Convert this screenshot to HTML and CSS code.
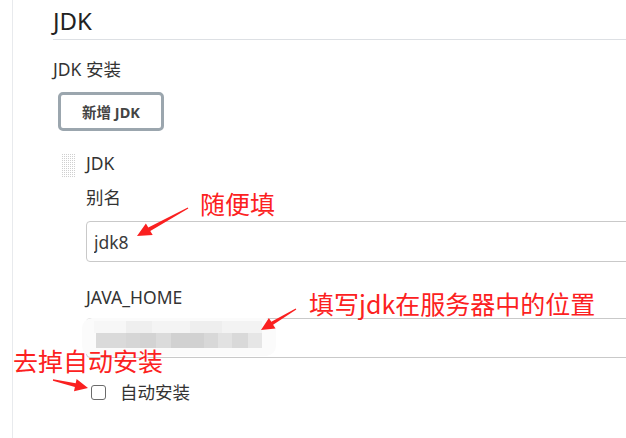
FILE: index.html
```html
<!DOCTYPE html>
<html lang="zh-CN">
<head>
<meta charset="utf-8">
<title>JDK</title>
<link rel="stylesheet" href="styles.css">
</head>
<body>
<div class="page">
  <h1 class="section-title">JDK</h1>
  <div class="field-label">JDK 安装</div>
  <button class="btn-add" type="button">新增 JDK</button>
  <div class="repeated">
    <div class="drag-handle"></div>
    <div class="repeated-body">
      <div class="item-title">JDK</div>
      <div class="field-label sub">别名</div>
      <input class="text-input first" type="text" value="jdk8">
      <div class="field-label sub home">JAVA_HOME</div>
      <input class="text-input second" type="text" value="">
      <label class="check-row"><span class="checkbox"></span><span class="check-text">自动安装</span></label>
    </div>
  </div>
</div>

<div class="mosaic">
  <div class="mosaic-top"></div>
  <div class="mosaic-bar"></div>
</div>

<div class="annotations">
  <svg class="arrows" width="626" height="438" viewBox="0 0 626 438">
    <polygon points="187.8,207.4 148.3,227.5 145.9,223.4 137,236 152.7,235.0 150.3,231.1 188.3,208.6" />
    <polygon points="295.7,308.5 271.3,321.8 268.9,318.0 261,330 275.5,328.6 273.1,324.8 296.3,309.6" />
    <polygon points="53.1,379.3 75.7,383.3 76.6,379.0 88,388 74.0,391.2 74.9,386.9 52.9,380.7" />
  </svg>
  <span class="note note-alias">随便填</span>
  <span class="note note-home">填写jdk在服务器中的位置</span>
  <span class="note note-auto">去掉自动安装</span>
</div>
</body>
</html>
```

FILE: styles.css
```css
html, body {
  margin: 0;
  padding: 0;
}

body {
  width: 626px;
  height: 438px;
  overflow: hidden;
  position: relative;
  background: #ffffff;
  color: #333333;
  font-family: "Noto Sans", "Noto Sans CJK SC", sans-serif;
}

.page {
  margin-left: 12px;
  border-left: 1px solid #e8eaed;
  height: 438px;
  padding-left: 40px;
  box-sizing: border-box;
}

.section-title {
  margin: 0;
  padding: 5px 0 2px;
  font-size: 24px;
  font-weight: 400;
  line-height: 32px;
  color: #222222;
  border-bottom: 1px solid #dde0e4;
}

.field-label {
  margin-top: 18px;
  font-size: 17.5px;
  line-height: 22px;
  color: #333333;
}

.btn-add {
  display: block;
  margin: 12px 0 0 5px;
  width: 106px;
  height: 39px;
  box-sizing: border-box;
  border: 3px solid #9ba6ae;
  border-radius: 5px;
  background: #ffffff;
  color: #444444;
  font-family: "Noto Sans", "Noto Sans CJK SC", sans-serif;
  font-size: 14.5px;
  font-weight: 700;
  padding: 0;
}

.repeated {
  display: flex;
  margin-top: 21px;
}

.drag-handle {
  flex: none;
  width: 14px;
  height: 24px;
  margin: 1px 10px 0 9px;
  background-image:
    linear-gradient(90deg, transparent 1px, #ffffff 1px),
    linear-gradient(0deg, transparent 1px, #ffffff 1px);
  background-color: #cfcfcf;
  background-size: 2px 2px;
}

.repeated-body {
  flex: none;
  display: flex;
  flex-direction: column;
  align-items: flex-start;
}

.item-title {
  font-size: 17.5px;
  line-height: 22px;
  color: #333333;
}

.field-label.sub {
  margin-top: 12px;
}

.field-label.home {
  margin-top: 24px;
}

.text-input {
  width: 560px;
  box-sizing: border-box;
  border: 1px solid #c9c9c9;
  border-radius: 4px;
  padding: 0 7px;
  font-family: "Noto Sans", "Noto Sans CJK SC", sans-serif;
  font-size: 17.5px;
  color: #3a3a3a;
  background: #ffffff;
  outline: none;
}

.text-input.first {
  margin-top: 13px;
  height: 41px;
}

.text-input.second {
  margin-top: 10px;
  height: 40px;
}

.check-row {
  display: flex;
  align-items: center;
  margin-top: 23px;
  height: 22px;
}

.checkbox {
  flex: none;
  width: 15px;
  height: 15px;
  box-sizing: border-box;
  margin-left: 5px;
  border: 1px solid #6b6b6b;
  border-radius: 3px;
  background: #ffffff;
}

.check-text {
  margin-left: 14px;
  font-size: 17.5px;
  line-height: 22px;
  color: #333333;
}

/* blurred (redacted) path over the JAVA_HOME input */
.mosaic {
  position: absolute;
  left: 82px;
  top: 318px;
  width: 194px;
  height: 38px;
  border-radius: 10px;
  background: #fbfbfb;
  filter: blur(0.7px);
}

.mosaic-top {
  position: absolute;
  left: 12px;
  top: 3px;
  width: 168px;
  height: 12px;
  background: linear-gradient(90deg,
    #f7f7f7 0, #f7f7f7 32px,
    #efefef 32px, #efefef 58px,
    #f4f4f4 58px, #f4f4f4 96px,
    #eeeeee 96px, #eeeeee 128px,
    #f3f3f3 128px, #f3f3f3 168px);
}

.mosaic-bar {
  position: absolute;
  left: 14px;
  top: 15px;
  width: 166px;
  height: 15px;
  background: linear-gradient(90deg,
    #dadada 0, #dadada 30px,
    #d6d6d6 30px, #d6d6d6 44px,
    #d3d3d3 44px, #d3d3d3 60px,
    #dbdbdb 60px, #dbdbdb 75px,
    #d1d1d1 75px, #d1d1d1 108px,
    #d8d8d8 108px, #d8d8d8 122px,
    #e2e2e2 122px, #e2e2e2 136px,
    #d9d9d9 136px, #d9d9d9 152px,
    #e6e6e6 152px, #e6e6e6 166px);
}

.annotations {
  position: absolute;
  left: 0;
  top: 0;
  width: 626px;
  height: 438px;
  pointer-events: none;
}

.arrows {
  position: absolute;
  left: 0;
  top: 0;
}

.arrows polygon {
  fill: #fa2020;
}

.note {
  position: absolute;
  font-family: "Noto Sans CJK SC", sans-serif;
  font-size: 25px;
  line-height: 25px;
  color: #fc2121;
  white-space: nowrap;
}

.note-alias {
  left: 200px;
  top: 191px;
}

.note-home {
  left: 309px;
  top: 291px;
}

.note-auto {
  left: 13px;
  top: 348px;
}
```
